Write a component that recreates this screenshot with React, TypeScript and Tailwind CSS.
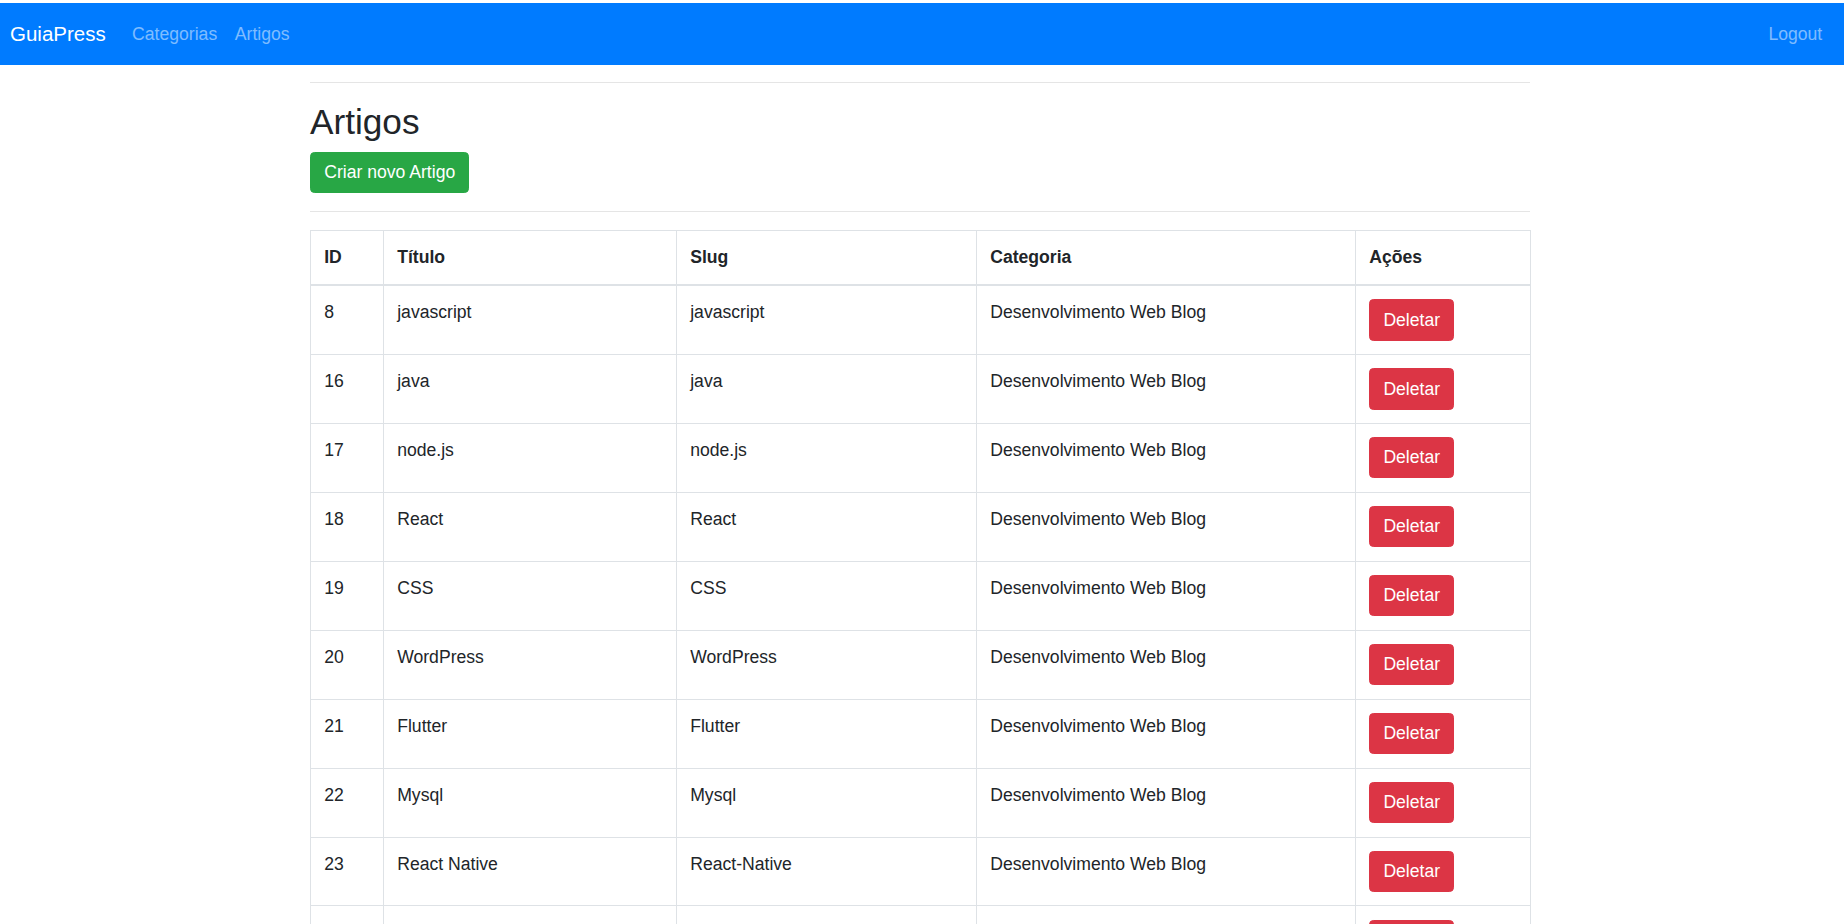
const rows = [
  { id: '8', title: 'javascript', slug: 'javascript', cat: 'Desenvolvimento Web Blog' },
  { id: '16', title: 'java', slug: 'java', cat: 'Desenvolvimento Web Blog' },
  { id: '17', title: 'node.js', slug: 'node.js', cat: 'Desenvolvimento Web Blog' },
  { id: '18', title: 'React', slug: 'React', cat: 'Desenvolvimento Web Blog' },
  { id: '19', title: 'CSS', slug: 'CSS', cat: 'Desenvolvimento Web Blog' },
  { id: '20', title: 'WordPress', slug: 'WordPress', cat: 'Desenvolvimento Web Blog' },
  { id: '21', title: 'Flutter', slug: 'Flutter', cat: 'Desenvolvimento Web Blog' },
  { id: '22', title: 'Mysql', slug: 'Mysql', cat: 'Desenvolvimento Web Blog' },
  { id: '23', title: 'React Native', slug: 'React-Native', cat: 'Desenvolvimento Web Blog' },
  { id: '', title: '', slug: '', cat: '' },
];

export default function App() {
  return (
    <div className="min-h-screen bg-white pt-[3px] text-[17.6px] leading-[1.5] text-[#212529] font-['Liberation_Sans',Arial,sans-serif]">
      {/* navbar */}
      <nav className="flex items-center bg-[#007bff] pl-[10px] pr-[13px] py-[8.8px]">
        <a className="text-[20.5px] leading-[33px] py-[5.5px] mr-[17.6px] text-white">GuiaPress</a>
        <a className="px-[8.8px] py-[8.8px] text-white/50">Categorias</a>
        <a className="px-[8.8px] py-[8.8px] text-white/50">Artigos</a>
        <a className="ml-auto px-[8.8px] py-[8.8px] text-white/50">Logout</a>
      </nav>

      <div className="w-[1220px] ml-[310px]">
        <hr className="my-[17.6px] border-0 border-t border-black/10" />
        <h2 className="text-[35.2px] leading-[1.2] font-medium mb-[8.8px]">Artigos</h2>
        <button className="bg-[#28a745] border border-[#28a745] text-white rounded-[4.4px] px-[13.2px] py-[6.6px] leading-[26.4px]">
          Criar novo Artigo
        </button>
        <hr className="mt-[17.6px] mb-[17.6px] border-0 border-t border-black/10" />

        <table className="w-full table-fixed border-collapse border border-[#dee2e6]">
          <colgroup>
            <col className="w-[73px]" />
            <col className="w-[293px]" />
            <col className="w-[300px]" />
            <col className="w-[379px]" />
            <col className="w-[175px]" />
          </colgroup>
          <thead>
            <tr>
              {['ID', 'Título', 'Slug', 'Categoria', 'Ações'].map((h) => (
                <th
                  key={h}
                  className="text-left align-bottom font-bold px-[13.2px] pt-[13.2px] pb-[13.6px] border border-[#dee2e6] border-b-2"
                >
                  {h}
                </th>
              ))}
            </tr>
          </thead>
          <tbody>
            {rows.map((r, i) => (
              <tr key={i}>
                <td className="align-top p-[13.2px] border border-[#dee2e6]">{r.id}</td>
                <td className="align-top p-[13.2px] border border-[#dee2e6]">{r.title}</td>
                <td className="align-top p-[13.2px] border border-[#dee2e6]">{r.slug}</td>
                <td className="align-top p-[13.2px] border border-[#dee2e6]">{r.cat}</td>
                <td className="align-top p-[13.2px] border border-[#dee2e6]">
                  <button className="bg-[#dc3545] border border-[#dc3545] text-white rounded-[4.4px] px-[13.2px] py-[6.6px] leading-[26.4px]">
                    Deletar
                  </button>
                </td>
              </tr>
            ))}
          </tbody>
        </table>
      </div>
    </div>
  );
}
